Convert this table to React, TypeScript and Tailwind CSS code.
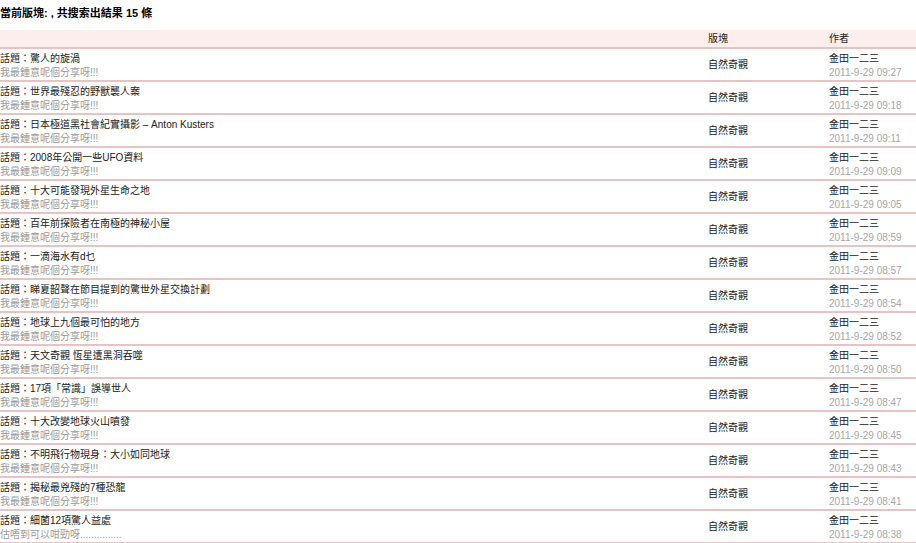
import React from "react";

const rows: { t: string; d: string; s?: string }[] = [
  { t: "驚人的旋渦", d: "09:27" },
  { t: "世界最殘忍的野獸襲人案", d: "09:18" },
  { t: "日本極道黑社會紀實攝影 – Anton Kusters", d: "09:11" },
  { t: "2008年公開一些UFO資料", d: "09:09" },
  { t: "十大可能發現外星生命之地", d: "09:05" },
  { t: "百年前探險者在南極的神秘小屋", d: "08:59" },
  { t: "一滴海水有d乜", d: "08:57" },
  { t: "睇夏韶聲在節目提到的驚世外星交換計劃", d: "08:54" },
  { t: "地球上九個最可怕的地方", d: "08:52" },
  { t: "天文奇觀 恆星遭黑洞吞噬", d: "08:50" },
  { t: "17項「常識」誤導世人", d: "08:47" },
  { t: "十大改變地球火山噴發", d: "08:45" },
  { t: "不明飛行物現身：大小如同地球", d: "08:43" },
  { t: "揭秘最兇殘的7種恐龍", d: "08:41" },
  { t: "細菌12項驚人益處", d: "08:38", s: "估唔到可以咁勁呀..............." },
];

export default function App() {
  return (
    <div
      className="w-[916px] h-[543px] overflow-hidden bg-white text-[10px] leading-[14px] text-[#222]"
      style={{ fontFamily: "'Liberation Sans', 'Noto Sans CJK TC', sans-serif" }}
    >
      <div className="h-[30px] pt-[6px] text-[11px] font-bold text-black">
        當前版塊: , 共搜索出結果 15 條
      </div>
      <div className="grid grid-cols-[708px_121px_1fr] h-[19px] bg-[#fdeeee] border-b-2 border-[#e6c4c4]">
        <div />
        <div className="leading-[18px]">版塊</div>
        <div className="leading-[18px]">作者</div>
      </div>
      {rows.map((r, i) => (
        <div
          key={i}
          className="grid grid-cols-[708px_121px_1fr] h-[33px] border-b-2 border-[#e6c4c4] pt-[3px]"
        >
          <div>
            <div>話題：{r.t}</div>
            <div className="text-[#9a9a9a]">{r.s ?? "我最鍾意呢個分享呀!!!"}</div>
          </div>
          <div className="flex items-center pb-[2px]">自然奇觀</div>
          <div>
            <div>金田一二三</div>
            <div className="text-[#a6a6a6]">2011-9-29 {r.d}</div>
          </div>
        </div>
      ))}
    </div>
  );
}
